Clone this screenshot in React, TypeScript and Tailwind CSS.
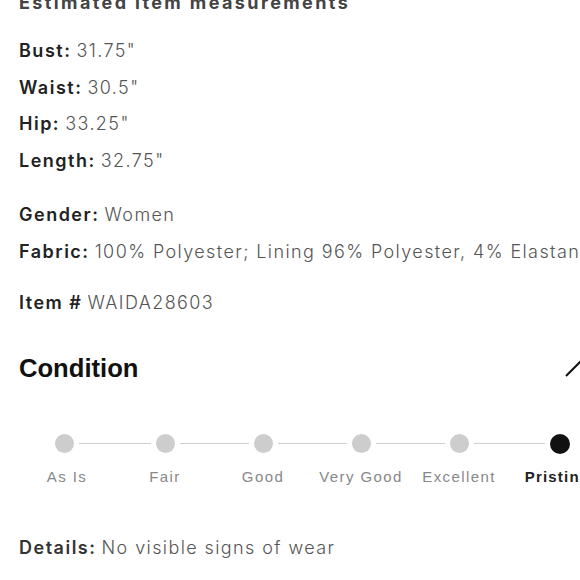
import type { ReactNode } from "react"

const measurements = [
    { label: "Bust:", value: "31.75\"" },
    { label: "Waist:", value: "30.5\"" },
    { label: "Hip:", value: "33.25\"" },
    { label: "Length:", value: "32.75\"" },
]

const conditions = ["As Is", "Fair", "Good", "Very Good", "Excellent", "Pristine"]
const selected = 5

function Row({ label, children }: { label: string; children: ReactNode }) {
    return (
        <p className="leading-[36.7px] whitespace-nowrap">
            <span className="font-semibold tracking-[1.5px] text-[#222]">{label}</span>{" "}
            <span className="font-light tracking-[1.4px] text-[#555]">{children}</span>
        </p>
    )
}

function ConditionScale() {
    return (
        <div className="mt-[48px] ml-[-1px] flex">
            {conditions.map((name, i) => (
                <div key={name} className="flex w-[98px] shrink-0 flex-col items-center">
                    <div className="flex h-[20px] w-full items-center">
                        <div className={i === 0 ? "flex-1" : "mr-[5px] h-px flex-1 bg-[#cfcfcf]"} />
                        <div
                            className={
                                i === selected
                                    ? "h-[20px] w-[20px] rounded-full bg-[#111]"
                                    : "h-[19px] w-[19px] rounded-full bg-[#cdcdcd]"
                            }
                        />
                        <div
                            className={
                                i === conditions.length - 1 ? "flex-1" : "ml-[5px] h-px flex-1 bg-[#cfcfcf]"
                            }
                        />
                    </div>
                    <span
                        className={
                            i === selected
                                ? "mt-[12px] whitespace-nowrap font-['Liberation_Sans',Arial,sans-serif] text-[15px] font-bold tracking-[1.2px] text-[#222]"
                                : "mt-[12px] whitespace-nowrap font-['Liberation_Sans',Arial,sans-serif] text-[15px] tracking-[1.4px] text-[#888]"
                        }
                    >
                        {name}
                    </span>
                </div>
            ))}
        </div>
    )
}

export default function App() {
    return (
        <div className="h-[580px] w-[580px] overflow-hidden bg-white font-['Inter','Liberation_Sans',sans-serif] text-[18px]">
            <div className="w-[581px] pl-[19px]">
                <h2 className="mt-[-9px] whitespace-nowrap text-[18px] font-bold leading-[24px] tracking-[2.4px] text-[#444]">
                    Estimated item measurements
                </h2>

                <div className="mt-[18px]">
                    {measurements.map((m) => (
                        <Row key={m.label} label={m.label}>
                            {m.value}
                        </Row>
                    ))}
                </div>

                <div className="mt-[17px]">
                    <Row label="Gender:">Women</Row>
                    <Row label="Fabric:">100% Polyester; Lining 96% Polyester, 4% Elastane</Row>
                </div>

                <div className="mt-[15px]">
                    <Row label="Item #">WAIDA28603</Row>
                </div>

                <div className="mt-[28px] flex items-center justify-between">
                    <h3 className="font-['Liberation_Sans',Arial,sans-serif] text-[25.6px] font-bold leading-[36px] text-[#111]">
                        Condition
                    </h3>
                    <svg width="36" height="20" viewBox="0 0 36 20" fill="none" className="mr-[-19px]">
                        <polyline points="2,18 18,2 34,18" stroke="#111" strokeWidth="2" />
                    </svg>
                </div>

                <ConditionScale />

                <p className="mt-[48px] whitespace-nowrap leading-[24px]">
                    <span className="font-semibold tracking-[1.5px] text-[#333]">Details:</span>{" "}
                    <span className="font-light tracking-[1.4px] text-[#555]">No visible signs of wear</span>
                </p>
            </div>
        </div>
    )
}
